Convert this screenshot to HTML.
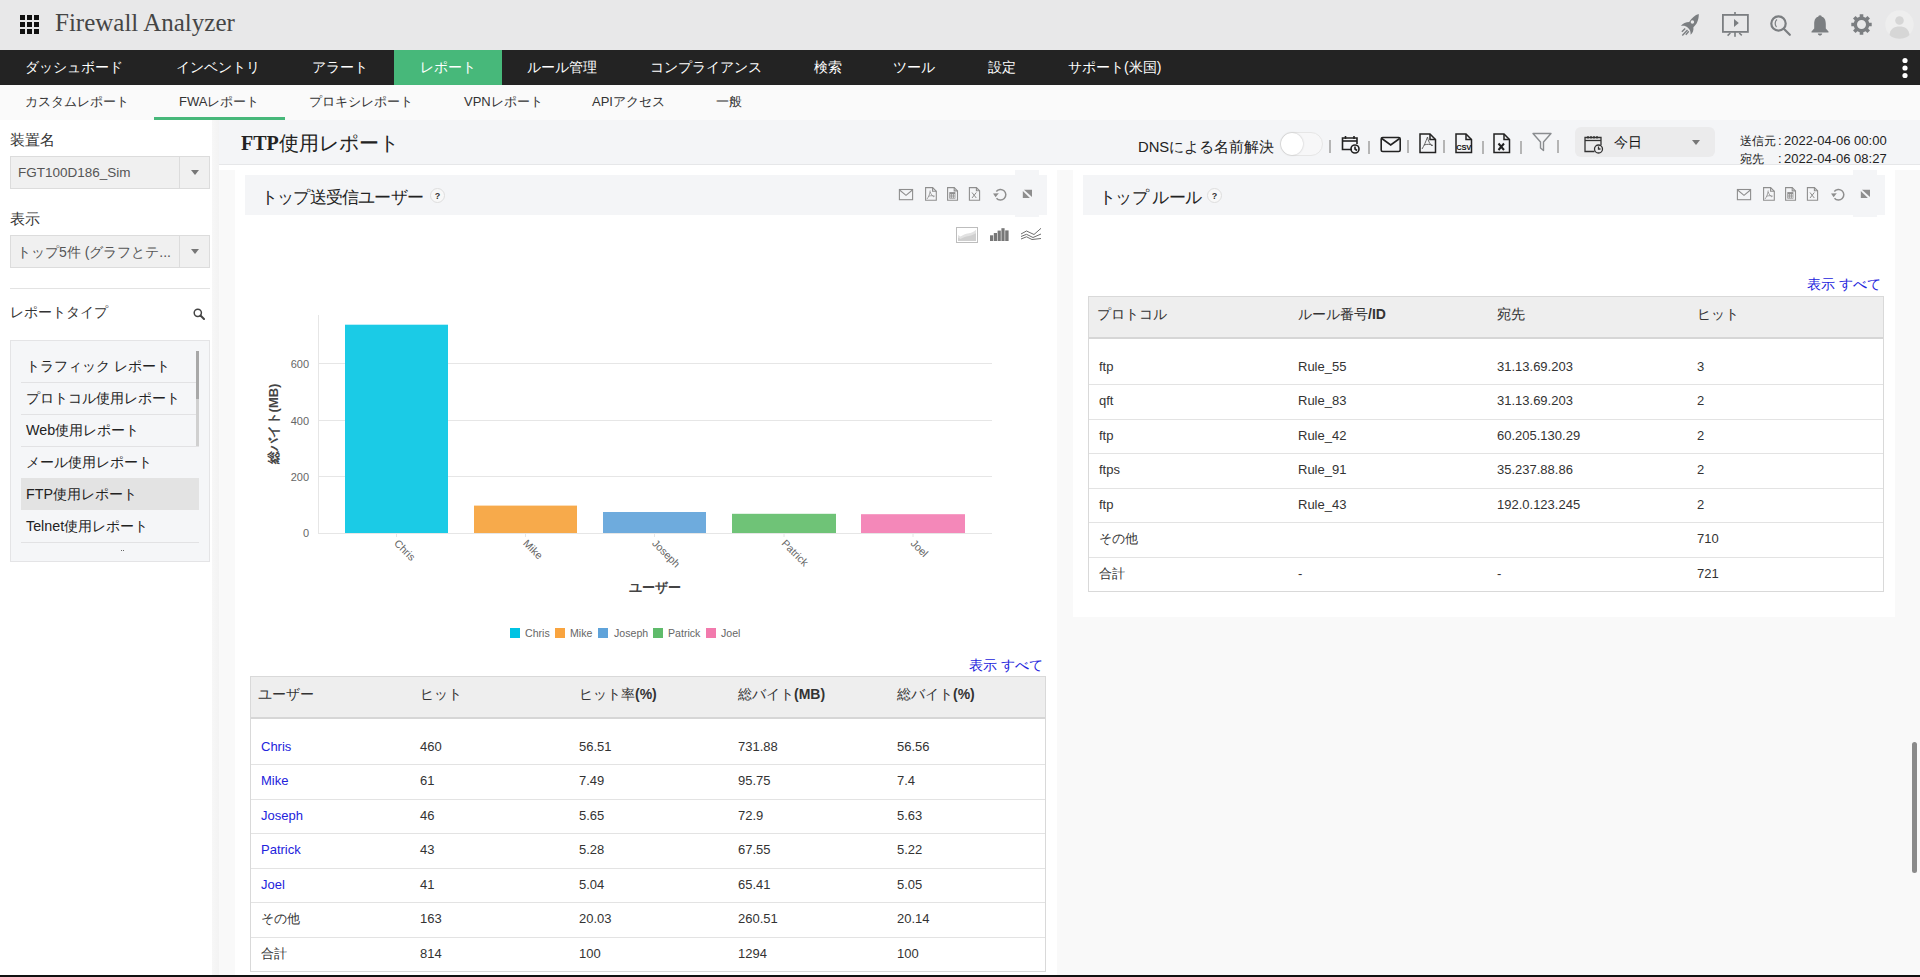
<!DOCTYPE html>
<html><head><meta charset="utf-8">
<style>
*{box-sizing:border-box;margin:0;padding:0}
html,body{width:1920px;height:977px;overflow:hidden;background:#fafafa;font-family:"Liberation Sans",sans-serif;color:#333}
.a{position:absolute;white-space:nowrap}
#top{position:absolute;left:0;top:0;width:1920px;height:50px;background:#e8e8e9}
#nav{position:absolute;left:0;top:50px;width:1920px;height:35px;background:#232323}
#nav .a{color:#fff;font-size:14px;top:8px;line-height:19px}
#sub{position:absolute;left:0;top:85px;width:1920px;height:35px;background:#fafafa;box-shadow:0 1px 2px rgba(0,0,0,.08)}
#sub .a{color:#333;font-size:13px;top:8px;line-height:18px}
#side{position:absolute;left:0;top:120px;width:212px;height:857px;background:#fff}
#sideshadow{position:absolute;left:212px;top:120px;width:7px;height:857px;background:linear-gradient(90deg,#f7f7f7,#f3f3f3)}
#ph{position:absolute;left:219px;top:120px;width:1701px;height:45px;background:#f4f5f7;border-bottom:1px solid #e6e7e9}
#content{position:absolute;left:219px;top:165px;width:1701px;height:812px;background:#f9f9f9}
#contenttop{position:absolute;left:219px;top:165px;width:1701px;height:5px;background:#fff}
.panel{position:absolute;background:#fff}
.phd{position:absolute;background:#f4f5f7}
.lbl{font-size:15px;color:#333}
.sel{position:absolute;left:10px;width:200px;height:33px;background:#f0f0f0;border:1px solid #dcdcdc}
.sel .div{position:absolute;left:168px;top:0;width:1px;height:31px;background:#dcdcdc}
.sel .car{position:absolute;left:180px;top:13px;width:0;height:0;border-left:4.5px solid transparent;border-right:4.5px solid transparent;border-top:5px solid #777}
.sel .t{position:absolute;left:8px;top:7px;font-size:14px;color:#555;line-height:18px}
#bottombar{position:absolute;left:0;top:975px;width:1920px;height:2px;background:#111}
</style></head>
<body>
<div id="top">
  <svg class="a" style="left:19px;top:14px" width="21" height="21" viewBox="0 0 21 21">
    <g fill="#111"><rect x="1" y="1" width="5" height="5"/><rect x="8" y="1" width="5" height="5"/><rect x="15" y="1" width="5" height="5"/>
    <rect x="1" y="8" width="5" height="5"/><rect x="8" y="8" width="5" height="5"/><rect x="15" y="8" width="5" height="5"/>
    <rect x="1" y="15" width="5" height="5"/><rect x="8" y="15" width="5" height="5"/><rect x="15" y="15" width="5" height="5"/></g>
  </svg>
  <div class="a" style="left:55px;top:8px;font-family:'Liberation Serif',serif;font-size:25px;color:#454545;line-height:30px">Firewall Analyzer</div>
  <svg class="a" style="left:1680px;top:13px" width="20" height="23" viewBox="0 0 20 23"><path fill="#7b7e81" d="M18.8 1 C15 2 11.5 5 9.2 9 C6 9 2.8 10.6 0.8 12.9 C3.5 12.3 6 12.8 7.6 14.4 L8.6 15.4 C10.2 17 10.8 19.2 10.6 21.7 C12.8 20 13.8 17.3 13.4 14.2 C16.8 11.5 18.8 7 18.8 1 Z"/><circle cx="12.4" cy="9.1" r="1.75" fill="#e8e8e9"/><g stroke="#7b7e81" stroke-width="1.4" stroke-linecap="butt"><line x1="1.9" y1="18.75" x2="5.2" y2="15.4"/><line x1="2.3" y1="22.5" x2="7.5" y2="16.9"/><line x1="5.8" y1="21.7" x2="8.75" y2="18.3"/></g></svg>
  <svg class="a" style="left:1722px;top:12px" width="28" height="25" viewBox="0 0 28 25"><rect x="0.9" y="2.9" width="25" height="17" fill="none" stroke="#7b7e81" stroke-width="1.8"/><g fill="#7b7e81"><rect x="12.2" y="0" width="1.6" height="2.5"/><rect x="12.2" y="20" width="1.6" height="4.8"/><path d="M12 7 L16.8 11 L12 15 Z"/></g><g stroke="#7b7e81" stroke-width="1.5"><line x1="8.4" y1="21" x2="5.6" y2="23.6"/><line x1="17.2" y1="21" x2="19.8" y2="23.4"/></g></svg>
  <svg class="a" style="left:1770px;top:15px" width="21" height="21" viewBox="0 0 21 21"><g fill="none" stroke="#7b7e81" stroke-width="2.2"><circle cx="8.5" cy="8.5" r="7.2"/><line x1="13.8" y1="13.8" x2="19.8" y2="19.8" stroke-linecap="round"/></g><path d="M7 4.5 C4.8 6 4.5 10 6.5 12" fill="none" stroke="#7b7e81" stroke-width="1.2"/></svg>
  <svg class="a" style="left:1811px;top:15px" width="18" height="21" viewBox="0 0 18 21"><g fill="#7b7e81"><circle cx="9" cy="2" r="1.8"/><path d="M9 1.5 C4.5 1.5 3.2 5 3.2 9 L3.2 13.5 L0.5 16.5 L0.5 17.5 L17.5 17.5 L17.5 16.5 L14.8 13.5 L14.8 9 C14.8 5 13.5 1.5 9 1.5 Z"/><path d="M6.8 18.5 L11.2 18.5 C11 20 10 20.6 9 20.6 C8 20.6 7 20 6.8 18.5Z"/></g></svg>
  <svg class="a" style="left:1850.5px;top:14.3px" width="21" height="21" viewBox="0 0 21 21"><path fill="#7b7e81" fill-rule="evenodd" d="M8.70 2.81 L8.70 0.30 L12.30 0.30 L12.30 2.81 L14.67 3.79 L16.44 2.01 L18.99 4.56 L17.21 6.33 L18.19 8.70 L20.70 8.70 L20.70 12.30 L18.19 12.30 L17.21 14.67 L18.99 16.44 L16.44 18.99 L14.67 17.21 L12.30 18.19 L12.30 20.70 L8.70 20.70 L8.70 18.19 L6.33 17.21 L4.56 18.99 L2.01 16.44 L3.79 14.67 L2.81 12.30 L0.30 12.30 L0.30 8.70 L2.81 8.70 L3.79 6.33 L2.01 4.56 L4.56 2.01 L6.33 3.79Z M15.0 10.5 A4.5 4.5 0 1 0 6.0 10.5 A4.5 4.5 0 1 0 15.0 10.5Z"/></svg>
  <svg class="a" style="left:1885px;top:10px" width="29" height="29" viewBox="0 0 29 29"><circle cx="14.5" cy="14.5" r="14.2" fill="#eeeeee"/><circle cx="14.5" cy="10.5" r="4.3" fill="#d6d6d6"/><path d="M4.5 25 C5 19 9 16.5 14.5 16.5 C20 16.5 24 19 24.5 25 C22 27.5 18.5 28.7 14.5 28.7 C10.5 28.7 7 27.5 4.5 25Z" fill="#d6d6d6"/></svg>
</div>
<div id="nav">
  <div style="position:absolute;left:394px;top:0;width:108px;height:35px;background:#47b87a"></div>
  <div class="a" style="left:25px">ダッシュボード</div>
  <div class="a" style="left:176px">インベントリ</div>
  <div class="a" style="left:312px">アラート</div>
  <div class="a" style="left:420px">レポート</div>
  <div class="a" style="left:527px">ルール管理</div>
  <div class="a" style="left:650px">コンプライアンス</div>
  <div class="a" style="left:814px">検索</div>
  <div class="a" style="left:893px">ツール</div>
  <div class="a" style="left:988px">設定</div>
  <div class="a" style="left:1068px">サポート(米国)</div>
  <svg class="a" style="left:1900px;top:7px" width="10" height="22" viewBox="0 0 10 22"><g fill="#fff"><circle cx="5" cy="3.5" r="2.6"/><circle cx="5" cy="11" r="2.6"/><circle cx="5" cy="18.5" r="2.6"/></g></svg>
</div>
<div id="sub">
  <div class="a" style="left:25px">カスタムレポート</div>
  <div class="a" style="left:179px">FWAレポート</div>
  <div class="a" style="left:309px">プロキシレポート</div>
  <div class="a" style="left:464px">VPNレポート</div>
  <div class="a" style="left:592px">APIアクセス</div>
  <div class="a" style="left:716px">一般</div>
  <div style="position:absolute;left:154px;top:32px;width:131px;height:3px;background:#47b87a"></div>
</div>
<div id="side">
  <div class="a lbl" style="left:10px;top:11px">装置名</div>
  <div class="sel" style="top:36px"><div class="t" style="left:7px;font-size:13.5px">FGT100D186_Sim</div><div class="div"></div><div class="car"></div></div>
  <div class="a lbl" style="left:10px;top:90px">表示</div>
  <div class="sel" style="top:115px"><div class="t" style="left:6px">トップ5件 (グラフとテ...</div><div class="div"></div><div class="car"></div></div>
  <div style="position:absolute;left:10px;top:168px;width:200px;height:1px;background:#e3e3e3"></div>
  <div class="a lbl" style="left:10px;top:184px;font-size:14px">レポートタイプ</div>
  <svg class="a" style="left:193px;top:188px" width="12" height="12" viewBox="0 0 12 12"><circle cx="4.8" cy="4.8" r="3.6" fill="none" stroke="#444" stroke-width="1.5"/><line x1="7.5" y1="7.5" x2="11" y2="11" stroke="#444" stroke-width="2" stroke-linecap="round"/></svg>
  <div style="position:absolute;left:10px;top:220px;width:200px;height:222px;background:#f5f6f8;border:1px solid #e4e4e6">
    <div style="position:absolute;left:10px;top:137px;width:178px;height:32px;background:#e3e3e3"></div>
    <div style="position:absolute;left:10px;top:41px;width:178px;height:1px;background:#e2e2e4"></div>
    <div style="position:absolute;left:10px;top:73px;width:178px;height:1px;background:#e2e2e4"></div>
    <div style="position:absolute;left:10px;top:105px;width:178px;height:1px;background:#e2e2e4"></div>
    <div style="position:absolute;left:10px;top:201px;width:178px;height:1px;background:#e2e2e4"></div>
    <div style="position:absolute;left:185px;top:10px;width:2.5px;height:95px;background:#d0d0d0"></div>
    <div style="position:absolute;left:185px;top:10px;width:2.5px;height:48px;background:#a8a8a8"></div>
    <div class="a" style="left:15px;top:15px;font-size:14.3px;color:#222;line-height:20px">トラフィック レポート</div>
    <div class="a" style="left:15px;top:47px;font-size:14.3px;color:#222;line-height:20px">プロトコル使用レポート</div>
    <div class="a" style="left:15px;top:79px;font-size:14.3px;color:#222;line-height:20px">Web使用レポート</div>
    <div class="a" style="left:15px;top:111px;font-size:14.3px;color:#222;line-height:20px">メール使用レポート</div>
    <div class="a" style="left:15px;top:143px;font-size:14.3px;color:#222;line-height:20px">FTP使用レポート</div>
    <div class="a" style="left:15px;top:175px;font-size:14.3px;color:#222;line-height:20px">Telnet使用レポート</div>
    <div style="position:absolute;left:110px;top:209px;width:1px;height:1px;background:#666"></div>
    <div style="position:absolute;left:112px;top:209px;width:1px;height:1px;background:#666"></div>
  </div>
</div>
<div id="sideshadow"></div>
<div id="ph">
  <div class="a" style="left:22px;top:11px;font-size:20px;color:#222;line-height:24px"><b style="font-family:'Liberation Serif',serif">FTP</b>使用レポート</div>
  <div class="a" style="left:919px;top:17px;font-size:14.8px;color:#222;line-height:20px">DNSによる名前解決</div>
  <div style="position:absolute;left:1061px;top:12px;width:43px;height:24px;border-radius:12px;background:#f7f7f8;border:1px solid #e6e6e6"></div>
  <div style="position:absolute;left:1062px;top:13px;width:22px;height:22px;border-radius:11px;background:#fff;box-shadow:0 0 2px rgba(0,0,0,.25)"></div>
  <div style="position:absolute;left:1110px;top:20px;width:1.5px;height:13px;background:#b5b5b5"></div>
  <div style="position:absolute;left:1149px;top:21px;width:1.5px;height:13px;background:#b5b5b5"></div>
  <div style="position:absolute;left:1188px;top:20px;width:1.5px;height:13px;background:#b5b5b5"></div>
  <div style="position:absolute;left:1224px;top:20px;width:1.5px;height:13px;background:#b5b5b5"></div>
  <div style="position:absolute;left:1263px;top:21px;width:1.5px;height:13px;background:#b5b5b5"></div>
  <div style="position:absolute;left:1301px;top:21px;width:1.5px;height:13px;background:#b5b5b5"></div>
  <div style="position:absolute;left:1338px;top:20px;width:1.5px;height:13px;background:#b5b5b5"></div>
  <svg class="a" style="left:1122px;top:15px" width="19" height="19" viewBox="0 0 19 19"><g fill="none" stroke="#222" stroke-width="1.6"><path d="M11 14.5 H1.5 V3 H16 V9"/><line x1="1.5" y1="6" x2="16" y2="6"/><line x1="4.5" y1="1" x2="4.5" y2="4"/><line x1="13" y1="1" x2="13" y2="4"/><circle cx="14" cy="14" r="4"/><path d="M14 11.5 V14 L16 15.5"/></g></svg>
  <svg class="a" style="left:1161px;top:16px" width="22" height="17" viewBox="0 0 22 17"><g fill="none" stroke="#222" stroke-width="1.6"><rect x="1.2" y="1.5" width="19" height="14" rx="1.5"/><path d="M1.8 2.5 L10.7 9 L19.6 2.5"/></g></svg>
  <svg class="a" style="left:1200px;top:13px" width="18" height="21" viewBox="0 0 18 21"><g fill="none" stroke="#222" stroke-width="1.5"><path d="M1 1 H11 L16.5 6.5 V19.5 H1 Z"/><path d="M11 1 V6.5 H16.5"/></g><path d="M8.5 4 C7 8 5 13 3 16 M5 12 C8 11 11 11 14 12.5 M8.5 4 C9 8 11 11 13 13" fill="none" stroke="#555" stroke-width="0.9"/></svg>
  <svg class="a" style="left:1236px;top:13px" width="18" height="21" viewBox="0 0 18 21"><g fill="none" stroke="#222" stroke-width="1.5"><path d="M1 1 H11 L16.5 6.5 V19.5 H1 Z"/><path d="M11 1 V6.5 H16.5"/></g><text x="8.6" y="16.8" font-family="Liberation Sans" font-weight="bold" font-size="7.6" letter-spacing="-0.3" text-anchor="middle" fill="#111">CSV</text></svg>
  <svg class="a" style="left:1274px;top:13px" width="18" height="21" viewBox="0 0 18 21"><g fill="none" stroke="#222" stroke-width="1.5"><path d="M1 1 H11 L16.5 6.5 V19.5 H1 Z"/><path d="M11 1 V6.5 H16.5"/></g><path d="M5.5 10.5 L11 17 M11 10.5 L5.5 17" stroke="#222" stroke-width="2"/></svg>
  <svg class="a" style="left:1313px;top:12px" width="20" height="20" viewBox="0 0 20 20"><path d="M1 1.5 H19 L11.5 10 V18.5 L8.5 16 V10 Z" fill="none" stroke="#8a8d90" stroke-width="1.4" stroke-linejoin="round"/></svg>
  <div style="position:absolute;left:1356px;top:7px;width:140px;height:30px;border-radius:6px;background:#ebebec">
    <svg class="a" style="left:9px;top:8px" width="20" height="19" viewBox="0 0 20 19"><g fill="none" stroke="#333" stroke-width="1.3"><path d="M10.5 16.5 H1 V2.5 H17 V10"/><line x1="1" y1="5.5" x2="17" y2="5.5"/><path d="M4 1 V3.5 M7 1 V3.5 M10 1 V3.5 M13 1 V3.5"/><circle cx="14.5" cy="14" r="4"/><path d="M14.5 11.5 V14 H16.5"/></g></svg>
    <div class="a" style="left:39px;top:6px;font-size:14px;color:#111;line-height:18px">今日</div>
    <div style="position:absolute;left:117px;top:13px;width:0;height:0;border-left:4.5px solid transparent;border-right:4.5px solid transparent;border-top:5px solid #777"></div>
  </div>
  <div class="a" style="left:1521px;top:12px;font-size:12px;color:#222;line-height:18px">送信元<br>宛先</div>
  <div class="a" style="left:1559px;top:12px;font-size:13px;color:#222;line-height:18px">:<br>:</div>
  <div class="a" style="left:1565px;top:12px;font-size:13px;color:#222;line-height:18px">2022-04-06 00:00<br>2022-04-06 08:27</div>
</div>
<div id="content"></div>
<div id="contenttop"></div>
<div class="panel" style="left:235px;top:170px;width:822px;height:807px"></div>
<div class="panel" style="left:1073px;top:170px;width:822px;height:447px"></div>

<div class="phd" style="left:245px;top:175px;width:802px;height:40px">
  <div class="a" style="left:16px;top:11.5px;font-size:17px;letter-spacing:-0.8px;color:#222;line-height:22px">トップ送受信ユーザー</div>
  <div style="position:absolute;left:185px;top:13px;width:15px;height:15px;border-radius:8px;border:1px solid #dedede;background:#f8f8f8;font-size:9px;font-weight:bold;line-height:15px;text-align:center;color:#333">?</div>
</div>
<div class="phd" style="left:1083px;top:175px;width:802px;height:40px">
  <div class="a" style="left:16px;top:11.5px;font-size:17px;letter-spacing:-0.6px;color:#222;line-height:22px">トップ ルール</div>
  <div style="position:absolute;left:124px;top:13px;width:15px;height:15px;border-radius:8px;border:1px solid #dedede;background:#f8f8f8;font-size:9px;font-weight:bold;line-height:15px;text-align:center;color:#333">?</div>
</div>

  <div style="position:absolute;left:1015px;top:170px;width:24px;height:47px;background:#f4f5f7"></div>
  <svg class="a" style="left:898px;top:188px" width="16" height="13" viewBox="0 0 16 13"><g fill="none" stroke="#8e8e8e" stroke-width="1.1"><rect x="1.4" y="1.5" width="13.2" height="10.2"/><path d="M1.6 2 L8 7.3 L14.4 2"/></g></svg>
  <svg class="a" style="left:924px;top:186px" width="14" height="16" viewBox="0 0 14 16"><g fill="none" stroke="#8e8e8e" stroke-width="1.1"><path d="M1.6 1.6 H8.6 L12.3 5.3 V14.3 H1.6 Z"/><path d="M8.6 1.6 V5.3 H12.3"/></g><path d="M6.2 4.5 C6 8 4.5 11 3 13 M4.6 10.2 C7 9.5 9 9.6 10.8 10.2 M6.3 6 C7 8.5 8.3 10 10 11" fill="none" stroke="#8e8e8e" stroke-width="0.8"/></svg>
  <svg class="a" style="left:946px;top:186px" width="13" height="16" viewBox="0 0 13 16"><g fill="none" stroke="#8e8e8e" stroke-width="1.1"><path d="M1.6 1.6 H8.2 L11.5 4.9 V14.3 H1.6 Z"/><path d="M8.2 1.6 V4.9 H11.5"/></g><rect x="3.3" y="6.1" width="6.1" height="6.5" fill="#8e8e8e"/><g fill="#f4f5f7"><rect x="4.2" y="8.3" width="1.1" height="1.2"/><rect x="6" y="8.3" width="1.1" height="1.2"/><rect x="7.8" y="8.3" width="1.1" height="1.2"/><rect x="4.2" y="10.5" width="1.1" height="1.2"/><rect x="6" y="10.5" width="1.1" height="1.2"/><rect x="7.8" y="10.5" width="1.1" height="1.2"/></g></svg>
  <svg class="a" style="left:968px;top:186px" width="13" height="16" viewBox="0 0 13 16"><g fill="none" stroke="#8e8e8e" stroke-width="1.1"><path d="M1.4 1.6 H8.4 L11.6 4.8 V14.3 H1.4 Z"/><path d="M8.4 1.6 V4.8 H11.6"/></g><path d="M4 6.5 L8.3 12 M8.3 6.5 L4 12" stroke="#8e8e8e" stroke-width="1"/></svg>
  <svg class="a" style="left:992px;top:188px" width="16" height="13" viewBox="0 0 16 13"><path d="M4.3 3.5 A5.3 5.3 0 1 1 4.5 10.2" fill="none" stroke="#8e8e8e" stroke-width="1.5"/><path d="M1 5.6 L6.8 5.2 L3.6 9.3 Z" fill="#8e8e8e"/></svg>
  <svg class="a" style="left:1022px;top:189px" width="11" height="10" viewBox="0 0 11 10"><path d="M2 0.8 H10 V8 Z" fill="#8e8e8e"/><path d="M0.8 2 L7.9 9 H0.8 Z" fill="#8e8e8e"/></svg>

  <div style="position:absolute;left:1853px;top:170px;width:24px;height:47px;background:#f4f5f7"></div>
  <svg class="a" style="left:1736px;top:188px" width="16" height="13" viewBox="0 0 16 13"><g fill="none" stroke="#8e8e8e" stroke-width="1.1"><rect x="1.4" y="1.5" width="13.2" height="10.2"/><path d="M1.6 2 L8 7.3 L14.4 2"/></g></svg>
  <svg class="a" style="left:1762px;top:186px" width="14" height="16" viewBox="0 0 14 16"><g fill="none" stroke="#8e8e8e" stroke-width="1.1"><path d="M1.6 1.6 H8.6 L12.3 5.3 V14.3 H1.6 Z"/><path d="M8.6 1.6 V5.3 H12.3"/></g><path d="M6.2 4.5 C6 8 4.5 11 3 13 M4.6 10.2 C7 9.5 9 9.6 10.8 10.2 M6.3 6 C7 8.5 8.3 10 10 11" fill="none" stroke="#8e8e8e" stroke-width="0.8"/></svg>
  <svg class="a" style="left:1784px;top:186px" width="13" height="16" viewBox="0 0 13 16"><g fill="none" stroke="#8e8e8e" stroke-width="1.1"><path d="M1.6 1.6 H8.2 L11.5 4.9 V14.3 H1.6 Z"/><path d="M8.2 1.6 V4.9 H11.5"/></g><rect x="3.3" y="6.1" width="6.1" height="6.5" fill="#8e8e8e"/><g fill="#f4f5f7"><rect x="4.2" y="8.3" width="1.1" height="1.2"/><rect x="6" y="8.3" width="1.1" height="1.2"/><rect x="7.8" y="8.3" width="1.1" height="1.2"/><rect x="4.2" y="10.5" width="1.1" height="1.2"/><rect x="6" y="10.5" width="1.1" height="1.2"/><rect x="7.8" y="10.5" width="1.1" height="1.2"/></g></svg>
  <svg class="a" style="left:1806px;top:186px" width="13" height="16" viewBox="0 0 13 16"><g fill="none" stroke="#8e8e8e" stroke-width="1.1"><path d="M1.4 1.6 H8.4 L11.6 4.8 V14.3 H1.4 Z"/><path d="M8.4 1.6 V4.8 H11.6"/></g><path d="M4 6.5 L8.3 12 M8.3 6.5 L4 12" stroke="#8e8e8e" stroke-width="1"/></svg>
  <svg class="a" style="left:1830px;top:188px" width="16" height="13" viewBox="0 0 16 13"><path d="M4.3 3.5 A5.3 5.3 0 1 1 4.5 10.2" fill="none" stroke="#8e8e8e" stroke-width="1.5"/><path d="M1 5.6 L6.8 5.2 L3.6 9.3 Z" fill="#8e8e8e"/></svg>
  <svg class="a" style="left:1860px;top:189px" width="11" height="10" viewBox="0 0 11 10"><path d="M2 0.8 H10 V8 Z" fill="#8e8e8e"/><path d="M0.8 2 L7.9 9 H0.8 Z" fill="#8e8e8e"/></svg>
  <svg class="a" style="left:956px;top:227px" width="22" height="16" viewBox="0 0 22 16"><rect x="0.5" y="0.5" width="21" height="15" fill="#fff" stroke="#bdbdbd" stroke-width="1"/><path d="M2 8 L4.5 9.5 C7 8 9 6.5 13 6.2 C16 6 18 4.5 20 2.8 V14 H2 Z" fill="#e2e2e2"/><path d="M2 10.5 L4.5 12 C7 10.5 9 9.5 13 9 C16 8.5 18 7.5 20 6.3 V14 H2 Z" fill="#cfcfcf"/></svg>
  <svg class="a" style="left:989.5px;top:227.8px" width="19" height="13" viewBox="0 0 19 13"><g fill="#777"><rect x="0" y="7.3" width="3.2" height="5.7"/><rect x="3.8" y="5" width="3.2" height="8"/><rect x="7.6" y="2.6" width="3.2" height="10.4"/><rect x="11.4" y="0.2" width="3.2" height="12.8"/><rect x="15.2" y="2.4" width="3.4" height="10.6"/></g></svg>
  <svg class="a" style="left:1021px;top:228px" width="20" height="12" viewBox="0 0 20 12"><g fill="none" stroke="#6d6d6d" stroke-width="1"><path d="M0 6 L5.5 3 L13 6.5 L20 0.3"/><path d="M0 8.5 L5.5 6.3 L12 9.5 L20 6"/><path d="M0 11 L5.5 8.8 L11 11.5 L20 10.5"/></g></svg>
<svg class="a" style="left:235px;top:290px" width="822" height="370" viewBox="235 290 822 370">
<g stroke="#e6e6e6" stroke-width="1"><line x1="318.5" y1="315" x2="318.5" y2="533"/>
<line x1="318" y1="363.5" x2="992" y2="363.5"/>
<line x1="318" y1="420.5" x2="992" y2="420.5"/>
<line x1="318" y1="476.5" x2="992" y2="476.5"/>
</g>
<text x="309" y="367.5" text-anchor="end" font-size="11" fill="#666" font-family="Liberation Sans">600</text>
<text x="309" y="424.5" text-anchor="end" font-size="11" fill="#666" font-family="Liberation Sans">400</text>
<text x="309" y="480.5" text-anchor="end" font-size="11" fill="#666" font-family="Liberation Sans">200</text>
<text x="309" y="537" text-anchor="end" font-size="11" fill="#666" font-family="Liberation Sans">0</text>
<rect x="345" y="324.7" width="103" height="208.3" fill="#1bcbe6"/>
<line x1="396.5" y1="533" x2="396.5" y2="537" stroke="#e6e6e6"/>
<text x="393.5" y="544" transform="rotate(45 393.5 544)" font-size="10.6" fill="#666" font-family="Liberation Sans">Chris</text>
<rect x="474" y="505.6" width="103" height="27.399999999999977" fill="#f7aa4b"/>
<line x1="525.5" y1="533" x2="525.5" y2="537" stroke="#e6e6e6"/>
<text x="522.5" y="544" transform="rotate(45 522.5 544)" font-size="10.6" fill="#666" font-family="Liberation Sans">Mike</text>
<rect x="603" y="512" width="103" height="21" fill="#6eabdd"/>
<line x1="654.5" y1="533" x2="654.5" y2="537" stroke="#e6e6e6"/>
<text x="651.5" y="544" transform="rotate(45 651.5 544)" font-size="10.6" fill="#666" font-family="Liberation Sans">Joseph</text>
<rect x="732" y="513.8" width="104" height="19.200000000000045" fill="#6fc377"/>
<line x1="784.0" y1="533" x2="784.0" y2="537" stroke="#e6e6e6"/>
<text x="781.0" y="544" transform="rotate(45 781.0 544)" font-size="10.6" fill="#666" font-family="Liberation Sans">Patrick</text>
<rect x="861" y="514.2" width="104" height="18.799999999999955" fill="#f488b9"/>
<line x1="913.0" y1="533" x2="913.0" y2="537" stroke="#e6e6e6"/>
<text x="910.0" y="544" transform="rotate(45 910.0 544)" font-size="10.6" fill="#666" font-family="Liberation Sans">Joel</text>
<line x1="318" y1="533.5" x2="992" y2="533.5" stroke="#e6e6e6"/>
<text x="0" y="0" transform="translate(278 424) rotate(-90)" text-anchor="middle" font-size="13" font-weight="bold" fill="#444" font-family="Liberation Sans">総バイト(MB)</text>
<text x="654.5" y="592" text-anchor="middle" font-size="13" font-weight="bold" fill="#444" font-family="Liberation Sans">ユーザー</text>
<rect x="510" y="628" width="10" height="10" fill="#00c3e3"/>
<text x="525" y="637" font-size="10.6" fill="#666" font-family="Liberation Sans">Chris</text>
<rect x="555" y="628" width="10" height="10" fill="#f9a43f"/>
<text x="570" y="637" font-size="10.6" fill="#666" font-family="Liberation Sans">Mike</text>
<rect x="598" y="628" width="10" height="10" fill="#5fa3da"/>
<text x="614" y="637" font-size="10.6" fill="#666" font-family="Liberation Sans">Joseph</text>
<rect x="653" y="628" width="10" height="10" fill="#5fbb6b"/>
<text x="668" y="637" font-size="10.6" fill="#666" font-family="Liberation Sans">Patrick</text>
<rect x="706" y="628" width="10" height="10" fill="#f27aad"/>
<text x="721" y="637" font-size="10.6" fill="#666" font-family="Liberation Sans">Joel</text>
</svg><div style="position:absolute;left:250px;top:676px;width:796px;height:296px;border:1px solid #d9d9d9;background:#fff"></div>
<div style="position:absolute;left:251px;top:677px;width:794px;height:42px;background:#eeeeee;border-bottom:2px solid #d6d6d6"></div>
<div class="a" style="left:258px;top:683.5px;font-size:14px;line-height:20px;color:#333">ユーザー</div>
<div class="a" style="left:420px;top:683.5px;font-size:14px;line-height:20px;color:#333">ヒット</div>
<div class="a" style="left:579px;top:683.5px;font-size:14px;line-height:20px;color:#333">ヒット率<b>(%)</b></div>
<div class="a" style="left:738px;top:683.5px;font-size:14px;line-height:20px;color:#333">総バイト<b>(MB)</b></div>
<div class="a" style="left:897px;top:683.5px;font-size:14px;line-height:20px;color:#333">総バイト<b>(%)</b></div>
<div style="position:absolute;left:251px;top:764px;width:794px;height:1px;background:#e3e3e3"></div>
<div style="position:absolute;left:251px;top:799px;width:794px;height:1px;background:#e3e3e3"></div>
<div style="position:absolute;left:251px;top:833px;width:794px;height:1px;background:#e3e3e3"></div>
<div style="position:absolute;left:251px;top:868px;width:794px;height:1px;background:#e3e3e3"></div>
<div style="position:absolute;left:251px;top:902px;width:794px;height:1px;background:#e3e3e3"></div>
<div style="position:absolute;left:251px;top:937px;width:794px;height:1px;background:#e3e3e3"></div>
<div class="a" style="left:261px;top:738px;font-size:13px;line-height:18px;color:#2323dc">Chris</div>
<div class="a" style="left:420px;top:738px;font-size:13px;line-height:18px;color:#333">460</div>
<div class="a" style="left:579px;top:738px;font-size:13px;line-height:18px;color:#333">56.51</div>
<div class="a" style="left:738px;top:738px;font-size:13px;line-height:18px;color:#333">731.88</div>
<div class="a" style="left:897px;top:738px;font-size:13px;line-height:18px;color:#333">56.56</div>
<div class="a" style="left:261px;top:772px;font-size:13px;line-height:18px;color:#2323dc">Mike</div>
<div class="a" style="left:420px;top:772px;font-size:13px;line-height:18px;color:#333">61</div>
<div class="a" style="left:579px;top:772px;font-size:13px;line-height:18px;color:#333">7.49</div>
<div class="a" style="left:738px;top:772px;font-size:13px;line-height:18px;color:#333">95.75</div>
<div class="a" style="left:897px;top:772px;font-size:13px;line-height:18px;color:#333">7.4</div>
<div class="a" style="left:261px;top:807px;font-size:13px;line-height:18px;color:#2323dc">Joseph</div>
<div class="a" style="left:420px;top:807px;font-size:13px;line-height:18px;color:#333">46</div>
<div class="a" style="left:579px;top:807px;font-size:13px;line-height:18px;color:#333">5.65</div>
<div class="a" style="left:738px;top:807px;font-size:13px;line-height:18px;color:#333">72.9</div>
<div class="a" style="left:897px;top:807px;font-size:13px;line-height:18px;color:#333">5.63</div>
<div class="a" style="left:261px;top:841px;font-size:13px;line-height:18px;color:#2323dc">Patrick</div>
<div class="a" style="left:420px;top:841px;font-size:13px;line-height:18px;color:#333">43</div>
<div class="a" style="left:579px;top:841px;font-size:13px;line-height:18px;color:#333">5.28</div>
<div class="a" style="left:738px;top:841px;font-size:13px;line-height:18px;color:#333">67.55</div>
<div class="a" style="left:897px;top:841px;font-size:13px;line-height:18px;color:#333">5.22</div>
<div class="a" style="left:261px;top:876px;font-size:13px;line-height:18px;color:#2323dc">Joel</div>
<div class="a" style="left:420px;top:876px;font-size:13px;line-height:18px;color:#333">41</div>
<div class="a" style="left:579px;top:876px;font-size:13px;line-height:18px;color:#333">5.04</div>
<div class="a" style="left:738px;top:876px;font-size:13px;line-height:18px;color:#333">65.41</div>
<div class="a" style="left:897px;top:876px;font-size:13px;line-height:18px;color:#333">5.05</div>
<div class="a" style="left:261px;top:910px;font-size:13px;line-height:18px;color:#333">その他</div>
<div class="a" style="left:420px;top:910px;font-size:13px;line-height:18px;color:#333">163</div>
<div class="a" style="left:579px;top:910px;font-size:13px;line-height:18px;color:#333">20.03</div>
<div class="a" style="left:738px;top:910px;font-size:13px;line-height:18px;color:#333">260.51</div>
<div class="a" style="left:897px;top:910px;font-size:13px;line-height:18px;color:#333">20.14</div>
<div class="a" style="left:261px;top:945px;font-size:13px;line-height:18px;color:#333">合計</div>
<div class="a" style="left:420px;top:945px;font-size:13px;line-height:18px;color:#333">814</div>
<div class="a" style="left:579px;top:945px;font-size:13px;line-height:18px;color:#333">100</div>
<div class="a" style="left:738px;top:945px;font-size:13px;line-height:18px;color:#333">1294</div>
<div class="a" style="left:897px;top:945px;font-size:13px;line-height:18px;color:#333">100</div><div style="position:absolute;left:1088px;top:296px;width:796px;height:296px;border:1px solid #d9d9d9;background:#fff"></div>
<div style="position:absolute;left:1089px;top:297px;width:794px;height:42px;background:#eeeeee;border-bottom:2px solid #d6d6d6"></div>
<div class="a" style="left:1097px;top:304.0px;font-size:14px;line-height:20px;color:#333">プロトコル</div>
<div class="a" style="left:1298px;top:304.0px;font-size:14px;line-height:20px;color:#333">ルール番号<b>/ID</b></div>
<div class="a" style="left:1497px;top:304.0px;font-size:14px;line-height:20px;color:#333">宛先</div>
<div class="a" style="left:1697px;top:304.0px;font-size:14px;line-height:20px;color:#333">ヒット</div>
<div style="position:absolute;left:1089px;top:384px;width:794px;height:1px;background:#e3e3e3"></div>
<div style="position:absolute;left:1089px;top:419px;width:794px;height:1px;background:#e3e3e3"></div>
<div style="position:absolute;left:1089px;top:453px;width:794px;height:1px;background:#e3e3e3"></div>
<div style="position:absolute;left:1089px;top:488px;width:794px;height:1px;background:#e3e3e3"></div>
<div style="position:absolute;left:1089px;top:522px;width:794px;height:1px;background:#e3e3e3"></div>
<div style="position:absolute;left:1089px;top:557px;width:794px;height:1px;background:#e3e3e3"></div>
<div class="a" style="left:1099px;top:358px;font-size:13px;line-height:18px;color:#333">ftp</div>
<div class="a" style="left:1298px;top:358px;font-size:13px;line-height:18px;color:#333">Rule_55</div>
<div class="a" style="left:1497px;top:358px;font-size:13px;line-height:18px;color:#333">31.13.69.203</div>
<div class="a" style="left:1697px;top:358px;font-size:13px;line-height:18px;color:#333">3</div>
<div class="a" style="left:1099px;top:392px;font-size:13px;line-height:18px;color:#333">qft</div>
<div class="a" style="left:1298px;top:392px;font-size:13px;line-height:18px;color:#333">Rule_83</div>
<div class="a" style="left:1497px;top:392px;font-size:13px;line-height:18px;color:#333">31.13.69.203</div>
<div class="a" style="left:1697px;top:392px;font-size:13px;line-height:18px;color:#333">2</div>
<div class="a" style="left:1099px;top:427px;font-size:13px;line-height:18px;color:#333">ftp</div>
<div class="a" style="left:1298px;top:427px;font-size:13px;line-height:18px;color:#333">Rule_42</div>
<div class="a" style="left:1497px;top:427px;font-size:13px;line-height:18px;color:#333">60.205.130.29</div>
<div class="a" style="left:1697px;top:427px;font-size:13px;line-height:18px;color:#333">2</div>
<div class="a" style="left:1099px;top:461px;font-size:13px;line-height:18px;color:#333">ftps</div>
<div class="a" style="left:1298px;top:461px;font-size:13px;line-height:18px;color:#333">Rule_91</div>
<div class="a" style="left:1497px;top:461px;font-size:13px;line-height:18px;color:#333">35.237.88.86</div>
<div class="a" style="left:1697px;top:461px;font-size:13px;line-height:18px;color:#333">2</div>
<div class="a" style="left:1099px;top:496px;font-size:13px;line-height:18px;color:#333">ftp</div>
<div class="a" style="left:1298px;top:496px;font-size:13px;line-height:18px;color:#333">Rule_43</div>
<div class="a" style="left:1497px;top:496px;font-size:13px;line-height:18px;color:#333">192.0.123.245</div>
<div class="a" style="left:1697px;top:496px;font-size:13px;line-height:18px;color:#333">2</div>
<div class="a" style="left:1099px;top:530px;font-size:13px;line-height:18px;color:#333">その他</div>
<div class="a" style="left:1298px;top:530px;font-size:13px;line-height:18px;color:#333"></div>
<div class="a" style="left:1497px;top:530px;font-size:13px;line-height:18px;color:#333"></div>
<div class="a" style="left:1697px;top:530px;font-size:13px;line-height:18px;color:#333">710</div>
<div class="a" style="left:1099px;top:565px;font-size:13px;line-height:18px;color:#333">合計</div>
<div class="a" style="left:1298px;top:565px;font-size:13px;line-height:18px;color:#333">-</div>
<div class="a" style="left:1497px;top:565px;font-size:13px;line-height:18px;color:#333">-</div>
<div class="a" style="left:1697px;top:565px;font-size:13px;line-height:18px;color:#333">721</div>
<div class="a" style="left:969px;top:656px;font-size:14px;line-height:18px;color:#2323dc">表示 すべて</div>
<div class="a" style="left:1807px;top:275px;font-size:14px;line-height:18px;color:#2323dc">表示 すべて</div>
<div style="position:absolute;left:1912px;top:742px;width:5px;height:131px;border-radius:3px;background:#8a8a8a"></div>
<div id="bottombar"></div>
</body></html>
